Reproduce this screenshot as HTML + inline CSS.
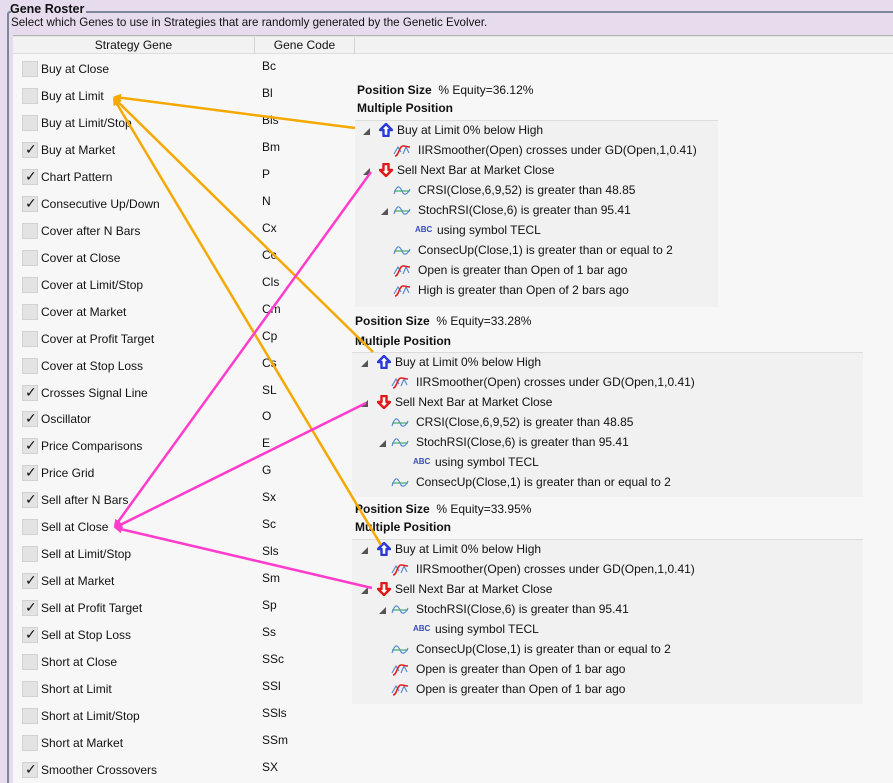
<!DOCTYPE html>
<html><head><meta charset="utf-8"><style>
*{margin:0;padding:0;box-sizing:border-box}
body{width:893px;height:783px;overflow:hidden;background:#e6dcee;font-family:"Liberation Sans",sans-serif;font-size:12px;color:#111;position:relative}
.a{position:absolute;white-space:nowrap}
.t{line-height:16px}
.cb{position:absolute;left:22px;width:16px;height:16px;background:#e3e3e3;border:1px solid #d2d2d2}
.ck{position:absolute;left:2px;top:-1px;font-size:14px;color:#111;font-family:"DejaVu Sans",sans-serif}
.pan{position:absolute;background:#f1f1f1;border-top:1px solid #dcdcdc}
.tri{position:absolute;width:0;height:0;border-left:7px solid transparent;border-bottom:7px solid #555}
.b{font-weight:bold}
</style></head><body>
<svg width="0" height="0" style="position:absolute"><defs>
<symbol id="up" viewBox="0 0 14 14"><path d="M7 1 L13 7 H9.5 V13 H4.5 V7 H1 Z" fill="#fff" stroke="#2a3ad8" stroke-width="2.4" stroke-linejoin="round"/></symbol>
<symbol id="dn" viewBox="0 0 14 14"><path d="M7 13 L13 7 H9.5 V1 H4.5 V7 H1 Z" fill="#fff" stroke="#e01818" stroke-width="2.4" stroke-linejoin="round"/></symbol>
<symbol id="cr" viewBox="0 0 18 14"><path d="M1 11 L5 4 L8 9" fill="none" stroke="#5a8ad0" stroke-width="1.2"/><path d="M10 11 L13 4 L16 10" fill="none" stroke="#5a8ad0" stroke-width="1.2"/><path d="M2 13 C6 13 6 3 10 3 C13 3 14 4 17 4" fill="none" stroke="#e02020" stroke-width="1.6"/></symbol>
<symbol id="wv" viewBox="0 0 18 14"><path d="M1 8 H17" stroke="#3cb060" stroke-width="1.2"/><path d="M1 11 C4 2 6 2 9 8 C11 13 14 12 17 6" fill="none" stroke="#5a8ad0" stroke-width="1.2"/></symbol>
</defs></svg>

<div class="a b t" style="left:10px;top:1px;font-size:12.5px">Gene Roster</div>
<div class="a" style="left:86px;top:11px;width:807px;border-top:2px solid #7a8898"></div>
<div class="a" style="left:7px;top:11px;width:4px;height:772px;border-left:2px solid #7a8898;border-top:2px solid #7a8898;border-top-left-radius:3px"></div>
<div class="a t" style="left:11px;top:15px;font-size:11.6px">Select which Genes to use in Strategies that are randomly generated by the Genetic Evolver.</div>
<div class="a" style="left:13px;top:35px;width:880px;height:748px;background:#f7f7f7;border-top:1px solid #b4b4b4"></div>
<div class="a" style="left:13px;top:36px;width:880px;height:18px;background:#f2f2f2;border-top:1px solid #e4e4e4;border-bottom:1px solid #dedede"></div>
<div class="a t" style="left:13px;top:37px;width:242px;height:17px;text-align:center;border-right:1px solid #d4d4d4;line-height:17px">Strategy Gene</div>
<div class="a t" style="left:255px;top:37px;width:100px;height:17px;text-align:center;border-right:1px solid #d4d4d4;line-height:17px">Gene Code</div>

<div id="rows"></div>

<div class="a t b" style="left:357px;top:82px">Position Size <span style="font-weight:normal">&nbsp;% Equity=36.12%</span></div>
<div class="a t b" style="left:357px;top:100px">Multiple Position</div>
<div class="pan" style="left:355px;top:120px;width:363px;height:187px"></div>

<div class="a t b" style="left:355px;top:313px">Position Size <span style="font-weight:normal">&nbsp;% Equity=33.28%</span></div>
<div class="a t b" style="left:355px;top:333px">Multiple Position</div>
<div class="pan" style="left:352px;top:352px;width:511px;height:145px"></div>

<div class="a t b" style="left:355px;top:501px">Position Size <span style="font-weight:normal">&nbsp;% Equity=33.95%</span></div>
<div class="a t b" style="left:355px;top:519px">Multiple Position</div>
<div class="pan" style="left:352px;top:539px;width:511px;height:165px"></div>

<div id="trees"></div>

<svg class="a" style="left:0;top:0" width="893" height="783">
<defs>
<marker id="mo" markerWidth="8" markerHeight="8" refX="6" refY="4" orient="auto" markerUnits="userSpaceOnUse"><path d="M0 0 L8 4 L0 8 Z" fill="#f5a800"/></marker>
<marker id="mm" markerWidth="8" markerHeight="8" refX="6" refY="4" orient="auto" markerUnits="userSpaceOnUse"><path d="M0 0 L8 4 L0 8 Z" fill="#ff3ccc"/></marker>
</defs>
<g stroke="#f5a800" stroke-width="2.5" fill="none">
<line x1="355" y1="128" x2="115" y2="97" marker-end="url(#mo)"/>
<line x1="373" y1="352" x2="115" y2="99" marker-end="url(#mo)"/>
<line x1="381" y1="545" x2="114" y2="99" marker-end="url(#mo)"/>
</g>
<g stroke="#ff3ccc" stroke-width="2.5" fill="none">
<line x1="371" y1="172" x2="115" y2="526" marker-end="url(#mm)"/>
<line x1="366" y1="403" x2="116" y2="527" marker-end="url(#mm)"/>
<line x1="372" y1="588" x2="116" y2="528" marker-end="url(#mm)"/>
</g>
</svg>

<script>
var R=[["Buy at Close","Bc",0],["Buy at Limit","Bl",0],["Buy at Limit/Stop","Bls",0],["Buy at Market","Bm",1],["Chart Pattern","P",1],["Consecutive Up/Down","N",1],["Cover after N Bars","Cx",0],["Cover at Close","Cc",0],["Cover at Limit/Stop","Cls",0],["Cover at Market","Cm",0],["Cover at Profit Target","Cp",0],["Cover at Stop Loss","Cs",0],["Crosses Signal Line","SL",1],["Oscillator","O",1],["Price Comparisons","E",1],["Price Grid","G",1],["Sell after N Bars","Sx",1],["Sell at Close","Sc",0],["Sell at Limit/Stop","Sls",0],["Sell at Market","Sm",1],["Sell at Profit Target","Sp",1],["Sell at Stop Loss","Ss",1],["Short at Close","SSc",0],["Short at Limit","SSl",0],["Short at Limit/Stop","SSls",0],["Short at Market","SSm",0],["Smoother Crossovers","SX",1]];
var h="";
R.forEach(function(r,i){var y=69+i*26.96;
h+='<div class="cb" style="top:'+(y-8)+'px">'+(r[2]?'<span class="ck">✓</span>':'')+'</div>';
h+='<div class="a t" style="left:41px;top:'+(y-8)+'px">'+r[0]+'</div>';
h+='<div class="a t" style="left:262px;top:'+(y-11)+'px">'+r[1]+'</div>';});
document.getElementById("rows").innerHTML=h;
function tree(x,y0,items){var s="";items.forEach(function(it,i){var y=y0+i*20,l=it[0],ic=it[1],tx=it[2],tr=it[3];
var ix=x+22+l*14, tx0=x+40+l*18;
if(l==2){ix=x+58;tx0=x+80;}
if(tr)s+='<div class="tri" style="left:'+(x+6+l*18)+'px;top:'+(y-2)+'px"></div>';
if(ic=="abc")s+='<div class="a" style="left:'+ix+'px;top:'+(y-5)+'px;font-size:8px;font-weight:bold;color:#3a4ac0">ABC</div>';
else{var w=(ic=="up"||ic=="dn")?14:18;if(l==1)ix=x+36;
s+='<svg class="a" style="left:'+ix+'px;top:'+(y-7)+'px" width="'+w+'" height="14"><use href="#'+ic+'"/></svg>';}
if(l==1)tx0=x+61;
s+='<div class="a t" style="left:'+tx0+'px;top:'+(y-8)+'px">'+tx+'</div>';});return s;}
var t="";
t+=tree(357,130,[[0,"up","Buy at Limit 0% below High",1],[1,"cr","IIRSmoother(Open) crosses under GD(Open,1,0.41)"],[0,"dn","Sell Next Bar at Market Close",1],[1,"wv","CRSI(Close,6,9,52) is greater than 48.85"],[1,"wv","StochRSI(Close,6) is greater than 95.41",1],[2,"abc","using symbol TECL"],[1,"wv","ConsecUp(Close,1) is greater than or equal to 2"],[1,"cr","Open is greater than Open of 1 bar ago"],[1,"cr","High is greater than Open of 2 bars ago"]]);
t+=tree(355,362,[[0,"up","Buy at Limit 0% below High",1],[1,"cr","IIRSmoother(Open) crosses under GD(Open,1,0.41)"],[0,"dn","Sell Next Bar at Market Close",1],[1,"wv","CRSI(Close,6,9,52) is greater than 48.85"],[1,"wv","StochRSI(Close,6) is greater than 95.41",1],[2,"abc","using symbol TECL"],[1,"wv","ConsecUp(Close,1) is greater than or equal to 2"]]);
t+=tree(355,549,[[0,"up","Buy at Limit 0% below High",1],[1,"cr","IIRSmoother(Open) crosses under GD(Open,1,0.41)"],[0,"dn","Sell Next Bar at Market Close",1],[1,"wv","StochRSI(Close,6) is greater than 95.41",1],[2,"abc","using symbol TECL"],[1,"wv","ConsecUp(Close,1) is greater than or equal to 2"],[1,"cr","Open is greater than Open of 1 bar ago"],[1,"cr","Open is greater than Open of 1 bar ago"]]);
document.getElementById("trees").innerHTML=t;
</script>
</body></html>
